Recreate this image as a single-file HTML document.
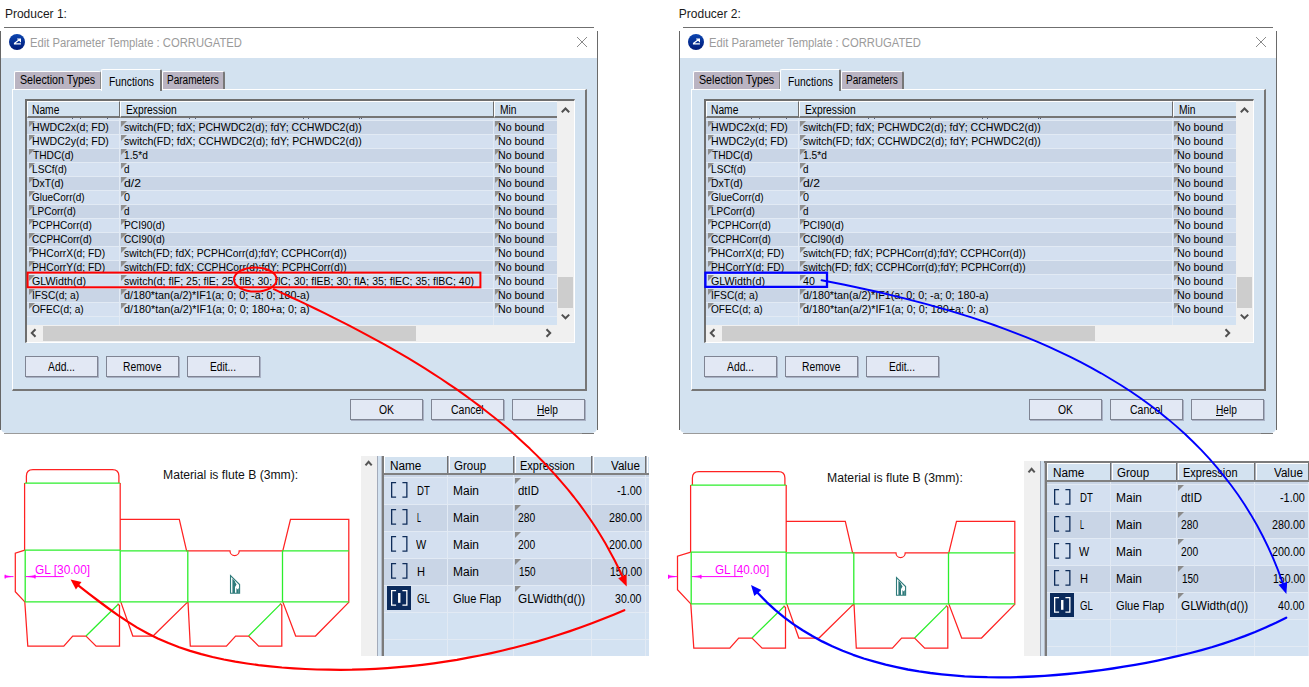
<!DOCTYPE html><html><head><meta charset="utf-8"><title>Producers</title><style>
html,body{margin:0;padding:0;background:#fff;}body{width:1309px;height:687px;position:relative;overflow:hidden;font-family:'Liberation Sans',sans-serif;}
.a{position:absolute}.t{position:absolute;white-space:pre}
.tri{width:0;height:0;border-top:6px solid #8e8e8e;border-right:6px solid transparent}
.tri2{width:0;height:0;border-top:6px solid #8a8a8a;border-right:6px solid transparent}
</style></head><body>
<span class="t" style="top:7.74px;font-size:12px;line-height:12px;color:#1a1a1a;left:4.90px;transform-origin:0 0;">Producer 1:</span>
<div class="a" style="left:4px;top:27px;width:590px;height:1px;background:#6f6f6f;"></div>
<div class="a" style="left:1px;top:58px;width:596px;height:375px;background:#d3e2f0;border-radius:0 0 5px 5px;"></div>
<div class="a" style="left:0px;top:31px;width:1px;height:399px;background:#666;"></div>
<div class="a" style="left:597px;top:31px;width:1px;height:399px;background:#6a6a6a;"></div>
<div class="a" style="left:4px;top:433px;width:590px;height:1px;background:#9a9a9a;"></div>
<div class="a" style="left:582px;top:433px;width:12px;height:1px;background:#777;"></div>
<svg class="a" style="left:8px;top:33px" width="18" height="18" viewBox="0 0 18 18"><defs><linearGradient id="ig1" x1="0" y1="0" x2="0" y2="1"><stop offset="0" stop-color="#0c45b0"/><stop offset="1" stop-color="#001a78"/></linearGradient></defs><circle cx="9" cy="9" r="8" fill="url(#ig1)"/><path d="M5.9 10.9 H12.9 M6.3 10.6 L12.2 6.1 M9.1 6 H12.4 V9.2" stroke="#fff" stroke-width="1.2" fill="none"/></svg>
<span class="t" style="top:36.64px;font-size:12px;line-height:12px;color:#9b9b9b;left:30.00px;transform-origin:0 0;transform:scaleX(0.9367);">Edit Parameter Template : CORRUGATED</span>
<svg class="a" style="left:576px;top:36px" width="12" height="12" viewBox="0 0 12 12"><path d="M1 1 L11 11 M11 1 L1 11" stroke="#8a8a8a" stroke-width="1" fill="none"/></svg>
<div class="a" style="left:12px;top:89px;width:575px;height:302px;background:#d3e2f0;box-sizing:border-box;border-left:1px solid #fff;border-top:1px solid #fff;border-right:2px solid #767676;border-bottom:2px solid #767676;"></div>
<div class="a" style="left:14px;top:71px;width:87px;height:18px;background:#bab4c2;box-sizing:border-box;border-left:1px solid #fff;border-top:1px solid #fff;border-right:1px solid #8a8a8a;border-radius:2px 2px 0 0;"></div>
<div class="a" style="left:162px;top:71px;width:63px;height:18px;background:#bab4c2;box-sizing:border-box;border-left:1px solid #fff;border-top:1px solid #fff;border-right:2px solid #777;border-radius:2px 2px 0 0;"></div>
<div class="a" style="left:101px;top:69px;width:61px;height:22px;background:#d3e2f0;box-sizing:border-box;border-left:1px solid #fff;border-top:1px solid #fff;border-right:2px solid #777;border-radius:2px 2px 0 0;"></div>
<span class="t" style="top:74.42px;font-size:12.5px;line-height:12.5px;color:#000;left:20.40px;transform-origin:0 0;transform:scaleX(0.8545);">Selection Types</span>
<span class="t" style="top:75.92px;font-size:12.5px;line-height:12.5px;color:#000;left:108.60px;transform-origin:0 0;transform:scaleX(0.8268);">Functions</span>
<span class="t" style="top:74.42px;font-size:12.5px;line-height:12.5px;color:#000;left:166.60px;transform-origin:0 0;transform:scaleX(0.8015);">Parameters</span>
<div class="a" style="left:25px;top:99px;width:550px;height:244px;background:#f0f0f0;box-sizing:border-box;border-left:2px solid #6e6e6e;border-top:2px solid #6e6e6e;border-right:1px solid #fff;border-bottom:1px solid #fff;"></div>
<div class="a" style="left:27px;top:101px;width:93px;height:17px;background:#d3e2f0;box-sizing:border-box;border-left:1px solid #fff;border-top:1px solid #fff;border-bottom:2px solid #757575;border-right:1px solid #6e6e6e;"></div>
<span class="t" style="top:104.02px;font-size:12.5px;line-height:12.5px;color:#000;left:31.50px;transform-origin:0 0;transform:scaleX(0.8200);">Name</span>
<div class="a" style="left:120px;top:101px;width:374px;height:17px;background:#d3e2f0;box-sizing:border-box;border-left:1px solid #fff;border-top:1px solid #fff;border-bottom:2px solid #757575;border-right:1px solid #6e6e6e;"></div>
<span class="t" style="top:104.02px;font-size:12.5px;line-height:12.5px;color:#000;left:126.20px;transform-origin:0 0;transform:scaleX(0.8200);">Expression</span>
<div class="a" style="left:494px;top:101px;width:63px;height:17px;background:#d3e2f0;box-sizing:border-box;border-left:1px solid #fff;border-top:1px solid #fff;border-bottom:2px solid #757575;"></div>
<span class="t" style="top:104.02px;font-size:12.5px;line-height:12.5px;color:#000;left:499.80px;transform-origin:0 0;transform:scaleX(0.8200);">Min</span>
<div class="a" style="left:27px;top:118px;width:530px;height:207px;background:#d4e0f0;"></div>
<div class="a" style="left:27px;top:120px;width:530px;height:1px;background:#e2eaf4;"></div>
<div class="a" style="left:27px;top:121px;width:530px;height:13px;background:#c9d5e6;"></div>
<div class="a tri" style="left:29px;top:121px;"></div>
<div class="a tri" style="left:121px;top:121px;"></div>
<div class="a tri" style="left:495px;top:121px;"></div>
<span class="t" style="top:121.77px;font-size:11.5px;line-height:11.5px;color:#000;left:31.90px;transform-origin:0 0;transform:scaleX(0.9185);">HWDC2x(d; FD)</span>
<span class="t" style="top:121.77px;font-size:11.5px;line-height:11.5px;color:#000;left:124.00px;transform-origin:0 0;transform:scaleX(0.9174);">switch(FD; fdX; PCHWDC2(d); fdY; CCHWDC2(d))</span>
<span class="t" style="top:121.77px;font-size:11.5px;line-height:11.5px;color:#000;left:497.80px;transform-origin:0 0;transform:scaleX(0.9267);">No bound</span>
<div class="a" style="left:27px;top:134px;width:530px;height:1px;background:#e2eaf4;"></div>
<div class="a" style="left:27px;top:135px;width:530px;height:13px;background:#d4e0f0;"></div>
<div class="a tri" style="left:29px;top:135px;"></div>
<div class="a tri" style="left:121px;top:135px;"></div>
<div class="a tri" style="left:495px;top:135px;"></div>
<span class="t" style="top:135.77px;font-size:11.5px;line-height:11.5px;color:#000;left:31.90px;transform-origin:0 0;transform:scaleX(0.9185);">HWDC2y(d; FD)</span>
<span class="t" style="top:135.77px;font-size:11.5px;line-height:11.5px;color:#000;left:124.00px;transform-origin:0 0;transform:scaleX(0.9174);">switch(FD; fdX; CCHWDC2(d); fdY; PCHWDC2(d))</span>
<span class="t" style="top:135.77px;font-size:11.5px;line-height:11.5px;color:#000;left:497.80px;transform-origin:0 0;transform:scaleX(0.9267);">No bound</span>
<div class="a" style="left:27px;top:148px;width:530px;height:1px;background:#e2eaf4;"></div>
<div class="a" style="left:27px;top:149px;width:530px;height:13px;background:#c9d5e6;"></div>
<div class="a tri" style="left:29px;top:149px;"></div>
<div class="a tri" style="left:121px;top:149px;"></div>
<div class="a tri" style="left:495px;top:149px;"></div>
<span class="t" style="top:149.77px;font-size:11.5px;line-height:11.5px;color:#000;left:33.20px;transform-origin:0 0;transform:scaleX(0.8848);">THDC(d)</span>
<span class="t" style="top:149.77px;font-size:11.5px;line-height:11.5px;color:#000;left:124.00px;transform-origin:0 0;transform:scaleX(0.8863);">1.5*d</span>
<span class="t" style="top:149.77px;font-size:11.5px;line-height:11.5px;color:#000;left:497.80px;transform-origin:0 0;transform:scaleX(0.9267);">No bound</span>
<div class="a" style="left:27px;top:162px;width:530px;height:1px;background:#e2eaf4;"></div>
<div class="a" style="left:27px;top:163px;width:530px;height:13px;background:#d4e0f0;"></div>
<div class="a tri" style="left:29px;top:163px;"></div>
<div class="a tri" style="left:121px;top:163px;"></div>
<div class="a tri" style="left:495px;top:163px;"></div>
<span class="t" style="top:163.77px;font-size:11.5px;line-height:11.5px;color:#000;left:31.90px;transform-origin:0 0;transform:scaleX(0.8809);">LSCf(d)</span>
<span class="t" style="top:163.77px;font-size:11.5px;line-height:11.5px;color:#000;left:124.00px;transform-origin:0 0;transform:scaleX(0.8617);">d</span>
<span class="t" style="top:163.77px;font-size:11.5px;line-height:11.5px;color:#000;left:497.80px;transform-origin:0 0;transform:scaleX(0.9267);">No bound</span>
<div class="a" style="left:27px;top:176px;width:530px;height:1px;background:#e2eaf4;"></div>
<div class="a" style="left:27px;top:177px;width:530px;height:13px;background:#c9d5e6;"></div>
<div class="a tri" style="left:29px;top:177px;"></div>
<div class="a tri" style="left:121px;top:177px;"></div>
<div class="a tri" style="left:495px;top:177px;"></div>
<span class="t" style="top:177.77px;font-size:11.5px;line-height:11.5px;color:#000;left:31.90px;transform-origin:0 0;transform:scaleX(0.9051);">DxT(d)</span>
<span class="t" style="top:177.77px;font-size:11.5px;line-height:11.5px;color:#000;left:124.00px;transform-origin:0 0;transform:scaleX(1.0572);">d/2</span>
<span class="t" style="top:177.77px;font-size:11.5px;line-height:11.5px;color:#000;left:497.80px;transform-origin:0 0;transform:scaleX(0.9267);">No bound</span>
<div class="a" style="left:27px;top:190px;width:530px;height:1px;background:#e2eaf4;"></div>
<div class="a" style="left:27px;top:191px;width:530px;height:13px;background:#d4e0f0;"></div>
<div class="a tri" style="left:29px;top:191px;"></div>
<div class="a tri" style="left:121px;top:191px;"></div>
<div class="a tri" style="left:495px;top:191px;"></div>
<span class="t" style="top:191.77px;font-size:11.5px;line-height:11.5px;color:#000;left:31.90px;transform-origin:0 0;transform:scaleX(0.8679);">GlueCorr(d)</span>
<span class="t" style="top:191.77px;font-size:11.5px;line-height:11.5px;color:#000;left:124.00px;transform-origin:0 0;transform:scaleX(0.9401);">0</span>
<span class="t" style="top:191.77px;font-size:11.5px;line-height:11.5px;color:#000;left:497.80px;transform-origin:0 0;transform:scaleX(0.9267);">No bound</span>
<div class="a" style="left:27px;top:204px;width:530px;height:1px;background:#e2eaf4;"></div>
<div class="a" style="left:27px;top:205px;width:530px;height:13px;background:#c9d5e6;"></div>
<div class="a tri" style="left:29px;top:205px;"></div>
<div class="a tri" style="left:121px;top:205px;"></div>
<div class="a tri" style="left:495px;top:205px;"></div>
<span class="t" style="top:205.77px;font-size:11.5px;line-height:11.5px;color:#000;left:31.90px;transform-origin:0 0;transform:scaleX(0.8676);">LPCorr(d)</span>
<span class="t" style="top:205.77px;font-size:11.5px;line-height:11.5px;color:#000;left:124.00px;transform-origin:0 0;transform:scaleX(0.8617);">d</span>
<span class="t" style="top:205.77px;font-size:11.5px;line-height:11.5px;color:#000;left:497.80px;transform-origin:0 0;transform:scaleX(0.9267);">No bound</span>
<div class="a" style="left:27px;top:218px;width:530px;height:1px;background:#e2eaf4;"></div>
<div class="a" style="left:27px;top:219px;width:530px;height:13px;background:#d4e0f0;"></div>
<div class="a tri" style="left:29px;top:219px;"></div>
<div class="a tri" style="left:121px;top:219px;"></div>
<div class="a tri" style="left:495px;top:219px;"></div>
<span class="t" style="top:219.77px;font-size:11.5px;line-height:11.5px;color:#000;left:31.90px;transform-origin:0 0;transform:scaleX(0.8747);">PCPHCorr(d)</span>
<span class="t" style="top:219.77px;font-size:11.5px;line-height:11.5px;color:#000;left:124.00px;transform-origin:0 0;transform:scaleX(0.8891);">PCI90(d)</span>
<span class="t" style="top:219.77px;font-size:11.5px;line-height:11.5px;color:#000;left:497.80px;transform-origin:0 0;transform:scaleX(0.9267);">No bound</span>
<div class="a" style="left:27px;top:232px;width:530px;height:1px;background:#e2eaf4;"></div>
<div class="a" style="left:27px;top:233px;width:530px;height:13px;background:#c9d5e6;"></div>
<div class="a tri" style="left:29px;top:233px;"></div>
<div class="a tri" style="left:121px;top:233px;"></div>
<div class="a tri" style="left:495px;top:233px;"></div>
<span class="t" style="top:233.77px;font-size:11.5px;line-height:11.5px;color:#000;left:31.90px;transform-origin:0 0;transform:scaleX(0.8667);">CCPHCorr(d)</span>
<span class="t" style="top:233.77px;font-size:11.5px;line-height:11.5px;color:#000;left:124.00px;transform-origin:0 0;transform:scaleX(0.8771);">CCI90(d)</span>
<span class="t" style="top:233.77px;font-size:11.5px;line-height:11.5px;color:#000;left:497.80px;transform-origin:0 0;transform:scaleX(0.9267);">No bound</span>
<div class="a" style="left:27px;top:246px;width:530px;height:1px;background:#e2eaf4;"></div>
<div class="a" style="left:27px;top:247px;width:530px;height:13px;background:#d4e0f0;"></div>
<div class="a tri" style="left:29px;top:247px;"></div>
<div class="a tri" style="left:121px;top:247px;"></div>
<div class="a tri" style="left:495px;top:247px;"></div>
<span class="t" style="top:247.77px;font-size:11.5px;line-height:11.5px;color:#000;left:31.90px;transform-origin:0 0;transform:scaleX(0.8940);">PHCorrX(d; FD)</span>
<span class="t" style="top:247.77px;font-size:11.5px;line-height:11.5px;color:#000;left:124.00px;transform-origin:0 0;transform:scaleX(0.8959);">switch(FD; fdX; PCPHCorr(d);fdY; CCPHCorr(d))</span>
<span class="t" style="top:247.77px;font-size:11.5px;line-height:11.5px;color:#000;left:497.80px;transform-origin:0 0;transform:scaleX(0.9267);">No bound</span>
<div class="a" style="left:27px;top:260px;width:530px;height:1px;background:#e2eaf4;"></div>
<div class="a" style="left:27px;top:261px;width:530px;height:13px;background:#c9d5e6;"></div>
<div class="a tri" style="left:29px;top:261px;"></div>
<div class="a tri" style="left:121px;top:261px;"></div>
<div class="a tri" style="left:495px;top:261px;"></div>
<span class="t" style="top:261.77px;font-size:11.5px;line-height:11.5px;color:#000;left:31.90px;transform-origin:0 0;transform:scaleX(0.8940);">PHCorrY(d; FD)</span>
<span class="t" style="top:261.77px;font-size:11.5px;line-height:11.5px;color:#000;left:124.00px;transform-origin:0 0;transform:scaleX(0.8959);">switch(FD; fdX; CCPHCorr(d);fdY; PCPHCorr(d))</span>
<span class="t" style="top:261.77px;font-size:11.5px;line-height:11.5px;color:#000;left:497.80px;transform-origin:0 0;transform:scaleX(0.9267);">No bound</span>
<div class="a" style="left:27px;top:274px;width:530px;height:1px;background:#e2eaf4;"></div>
<div class="a" style="left:27px;top:275px;width:530px;height:13px;background:#d4e0f0;"></div>
<div class="a tri" style="left:29px;top:275px;"></div>
<div class="a tri" style="left:121px;top:275px;"></div>
<div class="a tri" style="left:495px;top:275px;"></div>
<span class="t" style="top:275.77px;font-size:11.5px;line-height:11.5px;color:#000;left:31.90px;transform-origin:0 0;transform:scaleX(0.9317);">GLWidth(d)</span>
<span class="t" style="top:275.77px;font-size:11.5px;line-height:11.5px;color:#000;left:124.00px;transform-origin:0 0;transform:scaleX(0.9157);">switch(d; flF; 25; flE; 25; flB; 30; flC; 30; flEB; 30; flA; 35; flEC; 35; flBC; 40)</span>
<span class="t" style="top:275.77px;font-size:11.5px;line-height:11.5px;color:#000;left:497.80px;transform-origin:0 0;transform:scaleX(0.9267);">No bound</span>
<div class="a" style="left:27px;top:288px;width:530px;height:1px;background:#e2eaf4;"></div>
<div class="a" style="left:27px;top:289px;width:530px;height:13px;background:#c9d5e6;"></div>
<div class="a tri" style="left:29px;top:289px;"></div>
<div class="a tri" style="left:121px;top:289px;"></div>
<div class="a tri" style="left:495px;top:289px;"></div>
<span class="t" style="top:289.77px;font-size:11.5px;line-height:11.5px;color:#000;left:31.90px;transform-origin:0 0;transform:scaleX(0.8884);">IFSC(d; a)</span>
<span class="t" style="top:289.77px;font-size:11.5px;line-height:11.5px;color:#000;left:124.00px;transform-origin:0 0;transform:scaleX(0.9334);">d/180*tan(a/2)*IF1(a; 0; 0; -a; 0; 180-a)</span>
<span class="t" style="top:289.77px;font-size:11.5px;line-height:11.5px;color:#000;left:497.80px;transform-origin:0 0;transform:scaleX(0.9267);">No bound</span>
<div class="a" style="left:27px;top:302px;width:530px;height:1px;background:#e2eaf4;"></div>
<div class="a" style="left:27px;top:303px;width:530px;height:13px;background:#d4e0f0;"></div>
<div class="a tri" style="left:29px;top:303px;"></div>
<div class="a tri" style="left:121px;top:303px;"></div>
<div class="a tri" style="left:495px;top:303px;"></div>
<span class="t" style="top:303.77px;font-size:11.5px;line-height:11.5px;color:#000;left:31.90px;transform-origin:0 0;transform:scaleX(0.8798);">OFEC(d; a)</span>
<span class="t" style="top:303.77px;font-size:11.5px;line-height:11.5px;color:#000;left:124.00px;transform-origin:0 0;transform:scaleX(0.9380);">d/180*tan(a/2)*IF1(a; 0; 0; 180+a; 0; a)</span>
<span class="t" style="top:303.77px;font-size:11.5px;line-height:11.5px;color:#000;left:497.80px;transform-origin:0 0;transform:scaleX(0.9267);">No bound</span>
<div class="a" style="left:27px;top:316px;width:530px;height:1px;background:#e2eaf4;"></div>
<div class="a" style="left:27px;top:317px;width:530px;height:8px;background:#d3e2f2;"></div>
<div class="a" style="left:72px;top:118px;width:1px;height:1px;background:#56607a;"></div>
<div class="a" style="left:80px;top:118px;width:1px;height:1px;background:#56607a;"></div>
<div class="a" style="left:107px;top:118px;width:1px;height:1px;background:#56607a;"></div>
<div class="a" style="left:189px;top:118px;width:1px;height:1px;background:#56607a;"></div>
<div class="a" style="left:195px;top:118px;width:1px;height:1px;background:#56607a;"></div>
<div class="a" style="left:251px;top:118px;width:1px;height:1px;background:#56607a;"></div>
<div class="a" style="left:303px;top:118px;width:1px;height:1px;background:#56607a;"></div>
<div class="a" style="left:308px;top:118px;width:1px;height:1px;background:#56607a;"></div>
<div class="a" style="left:359px;top:118px;width:1px;height:1px;background:#56607a;"></div>
<div class="a" style="left:361px;top:118px;width:1px;height:1px;background:#56607a;"></div>
<div class="a" style="left:119px;top:118px;width:1px;height:207px;background:#e2eaf4;"></div>
<div class="a" style="left:493px;top:118px;width:1px;height:207px;background:#e2eaf4;"></div>
<div class="a" style="left:557px;top:101px;width:17px;height:224px;background:#f0f0f0;"></div>
<div class="a" style="left:558px;top:277px;width:15px;height:31px;background:#cdcdcd;"></div>
<svg class="a" style="left:557px;top:101px" width="17" height="224" viewBox="0 0 17 224"><path d="M4.8 11.2 L8.5 7.5 L12.2 11.2 M4.8 213.6 L8.5 217.3 L12.2 213.6" stroke="#505050" stroke-width="2" fill="none"/></svg>
<div class="a" style="left:27px;top:325px;width:547px;height:17px;background:#f0f0f0;"></div>
<div class="a" style="left:43px;top:326px;width:373px;height:15px;background:#cdcdcd;"></div>
<svg class="a" style="left:27px;top:325px" width="530" height="16" viewBox="0 0 530 16"><path d="M8.5 4.3 L4.8 8 L8.5 11.7 M519.5 4.3 L523.2 8 L519.5 11.7" stroke="#505050" stroke-width="2" fill="none"/></svg>
<div class="a" style="left:25px;top:356px;width:73px;height:21px;background:#e2e8f4;box-sizing:border-box;border:1px solid #7f8493;box-shadow:1px 1px 0 #a9b1c4;"></div>
<span class="t" style="top:361.44px;font-size:12px;line-height:12px;color:#000;left:47.50px;transform-origin:0 0;transform:scaleX(0.8604);">Add...</span>
<div class="a" style="left:106px;top:356px;width:73px;height:21px;background:#e2e8f4;box-sizing:border-box;border:1px solid #7f8493;box-shadow:1px 1px 0 #a9b1c4;"></div>
<span class="t" style="top:361.44px;font-size:12px;line-height:12px;color:#000;left:122.80px;transform-origin:0 0;transform:scaleX(0.8591);">Remove</span>
<div class="a" style="left:187px;top:356px;width:73px;height:21px;background:#e2e8f4;box-sizing:border-box;border:1px solid #7f8493;box-shadow:1px 1px 0 #a9b1c4;"></div>
<span class="t" style="top:361.44px;font-size:12px;line-height:12px;color:#000;left:210.40px;transform-origin:0 0;transform:scaleX(0.8480);">Edit...</span>
<div class="a" style="left:350px;top:399px;width:73px;height:21px;background:#e2e8f4;box-sizing:border-box;border:1px solid #7f8493;box-shadow:1px 1px 0 #a9b1c4;"></div>
<span class="t" style="top:404.44px;font-size:12px;line-height:12px;color:#000;left:378.50px;transform-origin:0 0;transform:scaleX(0.8651);">OK</span>
<div class="a" style="left:431px;top:399px;width:73px;height:21px;background:#e2e8f4;box-sizing:border-box;border:1px solid #7f8493;box-shadow:1px 1px 0 #a9b1c4;"></div>
<span class="t" style="top:404.44px;font-size:12px;line-height:12px;color:#000;left:450.50px;transform-origin:0 0;transform:scaleX(0.8748);">Cancel</span>
<div class="a" style="left:512px;top:399px;width:73px;height:21px;background:#e2e8f4;box-sizing:border-box;border:1px solid #7f8493;box-shadow:1px 1px 0 #a9b1c4;"></div>
<span class="t" style="top:404.44px;font-size:12px;line-height:12px;color:#000;left:537.30px;transform-origin:0 0;transform:scaleX(0.8475);"><u>H</u>elp</span>
<span class="t" style="top:7.74px;font-size:12px;line-height:12px;color:#1a1a1a;left:678.80px;transform-origin:0 0;">Producer 2:</span>
<div class="a" style="left:683px;top:27px;width:590px;height:1px;background:#6f6f6f;"></div>
<div class="a" style="left:680px;top:58px;width:596px;height:375px;background:#d3e2f0;border-radius:0 0 5px 5px;"></div>
<div class="a" style="left:679px;top:31px;width:1px;height:399px;background:#666;"></div>
<div class="a" style="left:1276px;top:31px;width:1px;height:399px;background:#6a6a6a;"></div>
<div class="a" style="left:683px;top:433px;width:590px;height:1px;background:#9a9a9a;"></div>
<div class="a" style="left:1261px;top:433px;width:12px;height:1px;background:#777;"></div>
<svg class="a" style="left:687px;top:33px" width="18" height="18" viewBox="0 0 18 18"><defs><linearGradient id="ig2" x1="0" y1="0" x2="0" y2="1"><stop offset="0" stop-color="#0c45b0"/><stop offset="1" stop-color="#001a78"/></linearGradient></defs><circle cx="9" cy="9" r="8" fill="url(#ig2)"/><path d="M5.9 10.9 H12.9 M6.3 10.6 L12.2 6.1 M9.1 6 H12.4 V9.2" stroke="#fff" stroke-width="1.2" fill="none"/></svg>
<span class="t" style="top:36.64px;font-size:12px;line-height:12px;color:#9b9b9b;left:709.00px;transform-origin:0 0;transform:scaleX(0.9367);">Edit Parameter Template : CORRUGATED</span>
<svg class="a" style="left:1255px;top:36px" width="12" height="12" viewBox="0 0 12 12"><path d="M1 1 L11 11 M11 1 L1 11" stroke="#8a8a8a" stroke-width="1" fill="none"/></svg>
<div class="a" style="left:691px;top:89px;width:575px;height:302px;background:#d3e2f0;box-sizing:border-box;border-left:1px solid #fff;border-top:1px solid #fff;border-right:2px solid #767676;border-bottom:2px solid #767676;"></div>
<div class="a" style="left:693px;top:71px;width:87px;height:18px;background:#bab4c2;box-sizing:border-box;border-left:1px solid #fff;border-top:1px solid #fff;border-right:1px solid #8a8a8a;border-radius:2px 2px 0 0;"></div>
<div class="a" style="left:841px;top:71px;width:63px;height:18px;background:#bab4c2;box-sizing:border-box;border-left:1px solid #fff;border-top:1px solid #fff;border-right:2px solid #777;border-radius:2px 2px 0 0;"></div>
<div class="a" style="left:780px;top:69px;width:61px;height:22px;background:#d3e2f0;box-sizing:border-box;border-left:1px solid #fff;border-top:1px solid #fff;border-right:2px solid #777;border-radius:2px 2px 0 0;"></div>
<span class="t" style="top:74.42px;font-size:12.5px;line-height:12.5px;color:#000;left:699.40px;transform-origin:0 0;transform:scaleX(0.8545);">Selection Types</span>
<span class="t" style="top:75.92px;font-size:12.5px;line-height:12.5px;color:#000;left:787.60px;transform-origin:0 0;transform:scaleX(0.8268);">Functions</span>
<span class="t" style="top:74.42px;font-size:12.5px;line-height:12.5px;color:#000;left:845.60px;transform-origin:0 0;transform:scaleX(0.8015);">Parameters</span>
<div class="a" style="left:704px;top:99px;width:550px;height:244px;background:#f0f0f0;box-sizing:border-box;border-left:2px solid #6e6e6e;border-top:2px solid #6e6e6e;border-right:1px solid #fff;border-bottom:1px solid #fff;"></div>
<div class="a" style="left:706px;top:101px;width:93px;height:17px;background:#d3e2f0;box-sizing:border-box;border-left:1px solid #fff;border-top:1px solid #fff;border-bottom:2px solid #757575;border-right:1px solid #6e6e6e;"></div>
<span class="t" style="top:104.02px;font-size:12.5px;line-height:12.5px;color:#000;left:710.50px;transform-origin:0 0;transform:scaleX(0.8200);">Name</span>
<div class="a" style="left:799px;top:101px;width:374px;height:17px;background:#d3e2f0;box-sizing:border-box;border-left:1px solid #fff;border-top:1px solid #fff;border-bottom:2px solid #757575;border-right:1px solid #6e6e6e;"></div>
<span class="t" style="top:104.02px;font-size:12.5px;line-height:12.5px;color:#000;left:805.20px;transform-origin:0 0;transform:scaleX(0.8200);">Expression</span>
<div class="a" style="left:1173px;top:101px;width:63px;height:17px;background:#d3e2f0;box-sizing:border-box;border-left:1px solid #fff;border-top:1px solid #fff;border-bottom:2px solid #757575;"></div>
<span class="t" style="top:104.02px;font-size:12.5px;line-height:12.5px;color:#000;left:1178.80px;transform-origin:0 0;transform:scaleX(0.8200);">Min</span>
<div class="a" style="left:706px;top:118px;width:530px;height:207px;background:#d4e0f0;"></div>
<div class="a" style="left:706px;top:120px;width:530px;height:1px;background:#e2eaf4;"></div>
<div class="a" style="left:706px;top:121px;width:530px;height:13px;background:#c9d5e6;"></div>
<div class="a tri" style="left:708px;top:121px;"></div>
<div class="a tri" style="left:800px;top:121px;"></div>
<div class="a tri" style="left:1174px;top:121px;"></div>
<span class="t" style="top:121.77px;font-size:11.5px;line-height:11.5px;color:#000;left:710.90px;transform-origin:0 0;transform:scaleX(0.9185);">HWDC2x(d; FD)</span>
<span class="t" style="top:121.77px;font-size:11.5px;line-height:11.5px;color:#000;left:803.00px;transform-origin:0 0;transform:scaleX(0.9174);">switch(FD; fdX; PCHWDC2(d); fdY; CCHWDC2(d))</span>
<span class="t" style="top:121.77px;font-size:11.5px;line-height:11.5px;color:#000;left:1176.80px;transform-origin:0 0;transform:scaleX(0.9267);">No bound</span>
<div class="a" style="left:706px;top:134px;width:530px;height:1px;background:#e2eaf4;"></div>
<div class="a" style="left:706px;top:135px;width:530px;height:13px;background:#d4e0f0;"></div>
<div class="a tri" style="left:708px;top:135px;"></div>
<div class="a tri" style="left:800px;top:135px;"></div>
<div class="a tri" style="left:1174px;top:135px;"></div>
<span class="t" style="top:135.77px;font-size:11.5px;line-height:11.5px;color:#000;left:710.90px;transform-origin:0 0;transform:scaleX(0.9185);">HWDC2y(d; FD)</span>
<span class="t" style="top:135.77px;font-size:11.5px;line-height:11.5px;color:#000;left:803.00px;transform-origin:0 0;transform:scaleX(0.9174);">switch(FD; fdX; CCHWDC2(d); fdY; PCHWDC2(d))</span>
<span class="t" style="top:135.77px;font-size:11.5px;line-height:11.5px;color:#000;left:1176.80px;transform-origin:0 0;transform:scaleX(0.9267);">No bound</span>
<div class="a" style="left:706px;top:148px;width:530px;height:1px;background:#e2eaf4;"></div>
<div class="a" style="left:706px;top:149px;width:530px;height:13px;background:#c9d5e6;"></div>
<div class="a tri" style="left:708px;top:149px;"></div>
<div class="a tri" style="left:800px;top:149px;"></div>
<div class="a tri" style="left:1174px;top:149px;"></div>
<span class="t" style="top:149.77px;font-size:11.5px;line-height:11.5px;color:#000;left:712.20px;transform-origin:0 0;transform:scaleX(0.8848);">THDC(d)</span>
<span class="t" style="top:149.77px;font-size:11.5px;line-height:11.5px;color:#000;left:803.00px;transform-origin:0 0;transform:scaleX(0.8863);">1.5*d</span>
<span class="t" style="top:149.77px;font-size:11.5px;line-height:11.5px;color:#000;left:1176.80px;transform-origin:0 0;transform:scaleX(0.9267);">No bound</span>
<div class="a" style="left:706px;top:162px;width:530px;height:1px;background:#e2eaf4;"></div>
<div class="a" style="left:706px;top:163px;width:530px;height:13px;background:#d4e0f0;"></div>
<div class="a tri" style="left:708px;top:163px;"></div>
<div class="a tri" style="left:800px;top:163px;"></div>
<div class="a tri" style="left:1174px;top:163px;"></div>
<span class="t" style="top:163.77px;font-size:11.5px;line-height:11.5px;color:#000;left:710.90px;transform-origin:0 0;transform:scaleX(0.8809);">LSCf(d)</span>
<span class="t" style="top:163.77px;font-size:11.5px;line-height:11.5px;color:#000;left:803.00px;transform-origin:0 0;transform:scaleX(0.8617);">d</span>
<span class="t" style="top:163.77px;font-size:11.5px;line-height:11.5px;color:#000;left:1176.80px;transform-origin:0 0;transform:scaleX(0.9267);">No bound</span>
<div class="a" style="left:706px;top:176px;width:530px;height:1px;background:#e2eaf4;"></div>
<div class="a" style="left:706px;top:177px;width:530px;height:13px;background:#c9d5e6;"></div>
<div class="a tri" style="left:708px;top:177px;"></div>
<div class="a tri" style="left:800px;top:177px;"></div>
<div class="a tri" style="left:1174px;top:177px;"></div>
<span class="t" style="top:177.77px;font-size:11.5px;line-height:11.5px;color:#000;left:710.90px;transform-origin:0 0;transform:scaleX(0.9051);">DxT(d)</span>
<span class="t" style="top:177.77px;font-size:11.5px;line-height:11.5px;color:#000;left:803.00px;transform-origin:0 0;transform:scaleX(1.0572);">d/2</span>
<span class="t" style="top:177.77px;font-size:11.5px;line-height:11.5px;color:#000;left:1176.80px;transform-origin:0 0;transform:scaleX(0.9267);">No bound</span>
<div class="a" style="left:706px;top:190px;width:530px;height:1px;background:#e2eaf4;"></div>
<div class="a" style="left:706px;top:191px;width:530px;height:13px;background:#d4e0f0;"></div>
<div class="a tri" style="left:708px;top:191px;"></div>
<div class="a tri" style="left:800px;top:191px;"></div>
<div class="a tri" style="left:1174px;top:191px;"></div>
<span class="t" style="top:191.77px;font-size:11.5px;line-height:11.5px;color:#000;left:710.90px;transform-origin:0 0;transform:scaleX(0.8679);">GlueCorr(d)</span>
<span class="t" style="top:191.77px;font-size:11.5px;line-height:11.5px;color:#000;left:803.00px;transform-origin:0 0;transform:scaleX(0.9401);">0</span>
<span class="t" style="top:191.77px;font-size:11.5px;line-height:11.5px;color:#000;left:1176.80px;transform-origin:0 0;transform:scaleX(0.9267);">No bound</span>
<div class="a" style="left:706px;top:204px;width:530px;height:1px;background:#e2eaf4;"></div>
<div class="a" style="left:706px;top:205px;width:530px;height:13px;background:#c9d5e6;"></div>
<div class="a tri" style="left:708px;top:205px;"></div>
<div class="a tri" style="left:800px;top:205px;"></div>
<div class="a tri" style="left:1174px;top:205px;"></div>
<span class="t" style="top:205.77px;font-size:11.5px;line-height:11.5px;color:#000;left:710.90px;transform-origin:0 0;transform:scaleX(0.8676);">LPCorr(d)</span>
<span class="t" style="top:205.77px;font-size:11.5px;line-height:11.5px;color:#000;left:803.00px;transform-origin:0 0;transform:scaleX(0.8617);">d</span>
<span class="t" style="top:205.77px;font-size:11.5px;line-height:11.5px;color:#000;left:1176.80px;transform-origin:0 0;transform:scaleX(0.9267);">No bound</span>
<div class="a" style="left:706px;top:218px;width:530px;height:1px;background:#e2eaf4;"></div>
<div class="a" style="left:706px;top:219px;width:530px;height:13px;background:#d4e0f0;"></div>
<div class="a tri" style="left:708px;top:219px;"></div>
<div class="a tri" style="left:800px;top:219px;"></div>
<div class="a tri" style="left:1174px;top:219px;"></div>
<span class="t" style="top:219.77px;font-size:11.5px;line-height:11.5px;color:#000;left:710.90px;transform-origin:0 0;transform:scaleX(0.8747);">PCPHCorr(d)</span>
<span class="t" style="top:219.77px;font-size:11.5px;line-height:11.5px;color:#000;left:803.00px;transform-origin:0 0;transform:scaleX(0.8891);">PCI90(d)</span>
<span class="t" style="top:219.77px;font-size:11.5px;line-height:11.5px;color:#000;left:1176.80px;transform-origin:0 0;transform:scaleX(0.9267);">No bound</span>
<div class="a" style="left:706px;top:232px;width:530px;height:1px;background:#e2eaf4;"></div>
<div class="a" style="left:706px;top:233px;width:530px;height:13px;background:#c9d5e6;"></div>
<div class="a tri" style="left:708px;top:233px;"></div>
<div class="a tri" style="left:800px;top:233px;"></div>
<div class="a tri" style="left:1174px;top:233px;"></div>
<span class="t" style="top:233.77px;font-size:11.5px;line-height:11.5px;color:#000;left:710.90px;transform-origin:0 0;transform:scaleX(0.8667);">CCPHCorr(d)</span>
<span class="t" style="top:233.77px;font-size:11.5px;line-height:11.5px;color:#000;left:803.00px;transform-origin:0 0;transform:scaleX(0.8771);">CCI90(d)</span>
<span class="t" style="top:233.77px;font-size:11.5px;line-height:11.5px;color:#000;left:1176.80px;transform-origin:0 0;transform:scaleX(0.9267);">No bound</span>
<div class="a" style="left:706px;top:246px;width:530px;height:1px;background:#e2eaf4;"></div>
<div class="a" style="left:706px;top:247px;width:530px;height:13px;background:#d4e0f0;"></div>
<div class="a tri" style="left:708px;top:247px;"></div>
<div class="a tri" style="left:800px;top:247px;"></div>
<div class="a tri" style="left:1174px;top:247px;"></div>
<span class="t" style="top:247.77px;font-size:11.5px;line-height:11.5px;color:#000;left:710.90px;transform-origin:0 0;transform:scaleX(0.8940);">PHCorrX(d; FD)</span>
<span class="t" style="top:247.77px;font-size:11.5px;line-height:11.5px;color:#000;left:803.00px;transform-origin:0 0;transform:scaleX(0.8959);">switch(FD; fdX; PCPHCorr(d);fdY; CCPHCorr(d))</span>
<span class="t" style="top:247.77px;font-size:11.5px;line-height:11.5px;color:#000;left:1176.80px;transform-origin:0 0;transform:scaleX(0.9267);">No bound</span>
<div class="a" style="left:706px;top:260px;width:530px;height:1px;background:#e2eaf4;"></div>
<div class="a" style="left:706px;top:261px;width:530px;height:13px;background:#c9d5e6;"></div>
<div class="a tri" style="left:708px;top:261px;"></div>
<div class="a tri" style="left:800px;top:261px;"></div>
<div class="a tri" style="left:1174px;top:261px;"></div>
<span class="t" style="top:261.77px;font-size:11.5px;line-height:11.5px;color:#000;left:710.90px;transform-origin:0 0;transform:scaleX(0.8940);">PHCorrY(d; FD)</span>
<span class="t" style="top:261.77px;font-size:11.5px;line-height:11.5px;color:#000;left:803.00px;transform-origin:0 0;transform:scaleX(0.8959);">switch(FD; fdX; CCPHCorr(d);fdY; PCPHCorr(d))</span>
<span class="t" style="top:261.77px;font-size:11.5px;line-height:11.5px;color:#000;left:1176.80px;transform-origin:0 0;transform:scaleX(0.9267);">No bound</span>
<div class="a" style="left:706px;top:274px;width:530px;height:1px;background:#e2eaf4;"></div>
<div class="a" style="left:706px;top:275px;width:530px;height:13px;background:#d4e0f0;"></div>
<div class="a tri" style="left:708px;top:275px;"></div>
<div class="a tri" style="left:800px;top:275px;"></div>
<div class="a tri" style="left:1174px;top:275px;"></div>
<span class="t" style="top:275.77px;font-size:11.5px;line-height:11.5px;color:#000;left:710.90px;transform-origin:0 0;transform:scaleX(0.9317);">GLWidth(d)</span>
<span class="t" style="top:275.77px;font-size:11.5px;line-height:11.5px;color:#000;left:803.00px;transform-origin:0 0;transform:scaleX(0.9244);">40</span>
<span class="t" style="top:275.77px;font-size:11.5px;line-height:11.5px;color:#000;left:1176.80px;transform-origin:0 0;transform:scaleX(0.9267);">No bound</span>
<div class="a" style="left:706px;top:288px;width:530px;height:1px;background:#e2eaf4;"></div>
<div class="a" style="left:706px;top:289px;width:530px;height:13px;background:#c9d5e6;"></div>
<div class="a tri" style="left:708px;top:289px;"></div>
<div class="a tri" style="left:800px;top:289px;"></div>
<div class="a tri" style="left:1174px;top:289px;"></div>
<span class="t" style="top:289.77px;font-size:11.5px;line-height:11.5px;color:#000;left:710.90px;transform-origin:0 0;transform:scaleX(0.8884);">IFSC(d; a)</span>
<span class="t" style="top:289.77px;font-size:11.5px;line-height:11.5px;color:#000;left:803.00px;transform-origin:0 0;transform:scaleX(0.9334);">d/180*tan(a/2)*IF1(a; 0; 0; -a; 0; 180-a)</span>
<span class="t" style="top:289.77px;font-size:11.5px;line-height:11.5px;color:#000;left:1176.80px;transform-origin:0 0;transform:scaleX(0.9267);">No bound</span>
<div class="a" style="left:706px;top:302px;width:530px;height:1px;background:#e2eaf4;"></div>
<div class="a" style="left:706px;top:303px;width:530px;height:13px;background:#d4e0f0;"></div>
<div class="a tri" style="left:708px;top:303px;"></div>
<div class="a tri" style="left:800px;top:303px;"></div>
<div class="a tri" style="left:1174px;top:303px;"></div>
<span class="t" style="top:303.77px;font-size:11.5px;line-height:11.5px;color:#000;left:710.90px;transform-origin:0 0;transform:scaleX(0.8798);">OFEC(d; a)</span>
<span class="t" style="top:303.77px;font-size:11.5px;line-height:11.5px;color:#000;left:803.00px;transform-origin:0 0;transform:scaleX(0.9380);">d/180*tan(a/2)*IF1(a; 0; 0; 180+a; 0; a)</span>
<span class="t" style="top:303.77px;font-size:11.5px;line-height:11.5px;color:#000;left:1176.80px;transform-origin:0 0;transform:scaleX(0.9267);">No bound</span>
<div class="a" style="left:706px;top:316px;width:530px;height:1px;background:#e2eaf4;"></div>
<div class="a" style="left:706px;top:317px;width:530px;height:8px;background:#d3e2f2;"></div>
<div class="a" style="left:751px;top:118px;width:1px;height:1px;background:#56607a;"></div>
<div class="a" style="left:759px;top:118px;width:1px;height:1px;background:#56607a;"></div>
<div class="a" style="left:786px;top:118px;width:1px;height:1px;background:#56607a;"></div>
<div class="a" style="left:868px;top:118px;width:1px;height:1px;background:#56607a;"></div>
<div class="a" style="left:874px;top:118px;width:1px;height:1px;background:#56607a;"></div>
<div class="a" style="left:930px;top:118px;width:1px;height:1px;background:#56607a;"></div>
<div class="a" style="left:982px;top:118px;width:1px;height:1px;background:#56607a;"></div>
<div class="a" style="left:987px;top:118px;width:1px;height:1px;background:#56607a;"></div>
<div class="a" style="left:1038px;top:118px;width:1px;height:1px;background:#56607a;"></div>
<div class="a" style="left:1040px;top:118px;width:1px;height:1px;background:#56607a;"></div>
<div class="a" style="left:798px;top:118px;width:1px;height:207px;background:#e2eaf4;"></div>
<div class="a" style="left:1172px;top:118px;width:1px;height:207px;background:#e2eaf4;"></div>
<div class="a" style="left:1236px;top:101px;width:17px;height:224px;background:#f0f0f0;"></div>
<div class="a" style="left:1237px;top:277px;width:15px;height:31px;background:#cdcdcd;"></div>
<svg class="a" style="left:1236px;top:101px" width="17" height="224" viewBox="0 0 17 224"><path d="M4.8 11.2 L8.5 7.5 L12.2 11.2 M4.8 213.6 L8.5 217.3 L12.2 213.6" stroke="#505050" stroke-width="2" fill="none"/></svg>
<div class="a" style="left:706px;top:325px;width:547px;height:17px;background:#f0f0f0;"></div>
<div class="a" style="left:722px;top:326px;width:373px;height:15px;background:#cdcdcd;"></div>
<svg class="a" style="left:706px;top:325px" width="530" height="16" viewBox="0 0 530 16"><path d="M8.5 4.3 L4.8 8 L8.5 11.7 M519.5 4.3 L523.2 8 L519.5 11.7" stroke="#505050" stroke-width="2" fill="none"/></svg>
<div class="a" style="left:704px;top:356px;width:73px;height:21px;background:#e2e8f4;box-sizing:border-box;border:1px solid #7f8493;box-shadow:1px 1px 0 #a9b1c4;"></div>
<span class="t" style="top:361.44px;font-size:12px;line-height:12px;color:#000;left:726.50px;transform-origin:0 0;transform:scaleX(0.8604);">Add...</span>
<div class="a" style="left:785px;top:356px;width:73px;height:21px;background:#e2e8f4;box-sizing:border-box;border:1px solid #7f8493;box-shadow:1px 1px 0 #a9b1c4;"></div>
<span class="t" style="top:361.44px;font-size:12px;line-height:12px;color:#000;left:801.80px;transform-origin:0 0;transform:scaleX(0.8591);">Remove</span>
<div class="a" style="left:866px;top:356px;width:73px;height:21px;background:#e2e8f4;box-sizing:border-box;border:1px solid #7f8493;box-shadow:1px 1px 0 #a9b1c4;"></div>
<span class="t" style="top:361.44px;font-size:12px;line-height:12px;color:#000;left:889.40px;transform-origin:0 0;transform:scaleX(0.8480);">Edit...</span>
<div class="a" style="left:1029px;top:399px;width:73px;height:21px;background:#e2e8f4;box-sizing:border-box;border:1px solid #7f8493;box-shadow:1px 1px 0 #a9b1c4;"></div>
<span class="t" style="top:404.44px;font-size:12px;line-height:12px;color:#000;left:1057.50px;transform-origin:0 0;transform:scaleX(0.8651);">OK</span>
<div class="a" style="left:1110px;top:399px;width:73px;height:21px;background:#e2e8f4;box-sizing:border-box;border:1px solid #7f8493;box-shadow:1px 1px 0 #a9b1c4;"></div>
<span class="t" style="top:404.44px;font-size:12px;line-height:12px;color:#000;left:1129.50px;transform-origin:0 0;transform:scaleX(0.8748);">Cancel</span>
<div class="a" style="left:1191px;top:399px;width:73px;height:21px;background:#e2e8f4;box-sizing:border-box;border:1px solid #7f8493;box-shadow:1px 1px 0 #a9b1c4;"></div>
<span class="t" style="top:404.44px;font-size:12px;line-height:12px;color:#000;left:1216.30px;transform-origin:0 0;transform:scaleX(0.8475);"><u>H</u>elp</span>
<div class="a" style="left:361px;top:456px;width:288px;height:200px;overflow:hidden;">
<div class="a" style="left:0px;top:-2px;width:288px;height:230px;background:#d3e2f0;"></div>
<div class="a" style="left:0px;top:-2px;width:16px;height:230px;background:#f0f0f0;"></div>
<svg class="a" style="left:0px;top:-2px" width="16" height="20" viewBox="0 0 16 20"><path d="M4.5 11.3 L7.6 7.8 L10.7 11.3" stroke="#555" stroke-width="2" fill="none"/></svg>
<div class="a" style="left:16px;top:-2px;width:1px;height:230px;background:#a3abba;"></div>
<div class="a" style="left:20px;top:-2px;width:1px;height:230px;background:#b4bac6;"></div>
<div class="a" style="left:21px;top:-2px;width:2px;height:230px;background:#7b7b7b;"></div>
<div class="a" style="left:20px;top:-2px;width:268px;height:2px;background:#7b7b7b;"></div>
<div class="a" style="left:23px;top:0px;width:63px;height:17px;background:#d3e2f0;box-sizing:border-box;border-left:1px solid #fff;border-top:1px solid #fff;"></div>
<div class="a" style="left:86px;top:0px;width:1px;height:19px;background:#707070;"></div>
<div class="a" style="left:87px;top:0px;width:1px;height:19px;background:#aab0bb;"></div>
<div class="a" style="left:88px;top:0px;width:64px;height:17px;background:#d3e2f0;box-sizing:border-box;border-left:1px solid #fff;border-top:1px solid #fff;"></div>
<div class="a" style="left:152px;top:0px;width:1px;height:19px;background:#707070;"></div>
<div class="a" style="left:153px;top:0px;width:1px;height:19px;background:#aab0bb;"></div>
<div class="a" style="left:154px;top:0px;width:76px;height:17px;background:#d3e2f0;box-sizing:border-box;border-left:1px solid #fff;border-top:1px solid #fff;"></div>
<div class="a" style="left:230px;top:0px;width:1px;height:19px;background:#707070;"></div>
<div class="a" style="left:231px;top:0px;width:1px;height:19px;background:#aab0bb;"></div>
<div class="a" style="left:232px;top:0px;width:52px;height:17px;background:#d3e2f0;box-sizing:border-box;border-left:1px solid #fff;border-top:1px solid #fff;"></div>
<div class="a" style="left:284px;top:0px;width:1px;height:19px;background:#707070;"></div>
<div class="a" style="left:285px;top:0px;width:1px;height:19px;background:#aab0bb;"></div>
<div class="a" style="left:286px;top:0px;width:14px;height:17px;background:#d3e2f0;box-sizing:border-box;border-left:1px solid #fff;border-top:1px solid #fff;"></div>
<div class="a" style="left:300px;top:0px;width:1px;height:19px;background:#707070;"></div>
<div class="a" style="left:301px;top:0px;width:1px;height:19px;background:#aab0bb;"></div>
<div class="a" style="left:23px;top:17px;width:265px;height:2px;background:#808080;"></div>
<span class="t" style="top:4.14px;font-size:12px;line-height:12px;color:#000;left:29.40px;transform-origin:0 0;transform:scaleX(0.9800);">Name</span>
<span class="t" style="top:4.14px;font-size:12px;line-height:12px;color:#000;left:93.10px;transform-origin:0 0;transform:scaleX(0.9622);">Group</span>
<span class="t" style="top:4.14px;font-size:12px;line-height:12px;color:#000;left:158.80px;transform-origin:0 0;transform:scaleX(0.9184);">Expression</span>
<span class="t" style="top:4.14px;font-size:12px;line-height:12px;color:#000;left:250.10px;transform-origin:0 0;transform:scaleX(0.9691);">Value</span>
<div class="a" style="left:23px;top:19px;width:265px;height:2px;background:#c9d5e6;"></div>
<div class="a" style="left:23px;top:21px;width:265px;height:1px;background:#e2eaf4;"></div>
<div class="a" style="left:23px;top:22px;width:265px;height:26px;background:#d4e0f0;"></div>
<svg class="a" style="left:29.60px;top:26.30px" width="17" height="16" viewBox="0 0 17 16"><path d="M5.1 0.65 H0.65 V15.15 H5.1 M11.4 0.65 H15.85 V15.15 H11.4" stroke="#0f2d5a" stroke-width="1.3" fill="none"/></svg>
<span class="t" style="top:29.14px;font-size:12px;line-height:12px;color:#000;left:55.50px;transform-origin:0 0;transform:scaleX(0.7990);">DT</span>
<span class="t" style="top:29.14px;font-size:12px;line-height:12px;color:#000;left:91.50px;transform-origin:0 0;transform:scaleX(0.9985);">Main</span>
<span class="t" style="top:29.14px;font-size:12px;line-height:12px;color:#000;left:157.20px;transform-origin:0 0;transform:scaleX(0.9491);">dtID</span>
<span class="t" style="top:29.14px;font-size:12px;line-height:12px;color:#000;left:255.80px;transform-origin:0 0;transform:scaleX(0.9064);">-1.00</span>
<div class="a tri2" style="left:154px;top:22px;"></div>
<div class="a" style="left:23px;top:48px;width:265px;height:1px;background:#e2eaf4;"></div>
<div class="a" style="left:23px;top:49px;width:265px;height:26px;background:#c9d5e6;"></div>
<svg class="a" style="left:29.60px;top:53.30px" width="17" height="16" viewBox="0 0 17 16"><path d="M5.1 0.65 H0.65 V15.15 H5.1 M11.4 0.65 H15.85 V15.15 H11.4" stroke="#0f2d5a" stroke-width="1.3" fill="none"/></svg>
<span class="t" style="top:56.14px;font-size:12px;line-height:12px;color:#000;left:55.50px;transform-origin:0 0;transform:scaleX(0.6006);">L</span>
<span class="t" style="top:56.14px;font-size:12px;line-height:12px;color:#000;left:91.50px;transform-origin:0 0;transform:scaleX(0.9985);">Main</span>
<span class="t" style="top:56.14px;font-size:12px;line-height:12px;color:#000;left:157.20px;transform-origin:0 0;transform:scaleX(0.8583);">280</span>
<span class="t" style="top:56.14px;font-size:12px;line-height:12px;color:#000;left:247.70px;transform-origin:0 0;transform:scaleX(0.8960);">280.00</span>
<div class="a tri2" style="left:154px;top:49px;"></div>
<div class="a" style="left:23px;top:75px;width:265px;height:1px;background:#e2eaf4;"></div>
<div class="a" style="left:23px;top:76px;width:265px;height:26px;background:#d4e0f0;"></div>
<svg class="a" style="left:29.60px;top:80.30px" width="17" height="16" viewBox="0 0 17 16"><path d="M5.1 0.65 H0.65 V15.15 H5.1 M11.4 0.65 H15.85 V15.15 H11.4" stroke="#0f2d5a" stroke-width="1.3" fill="none"/></svg>
<span class="t" style="top:83.14px;font-size:12px;line-height:12px;color:#000;left:55.20px;transform-origin:0 0;transform:scaleX(0.8995);">W</span>
<span class="t" style="top:83.14px;font-size:12px;line-height:12px;color:#000;left:91.50px;transform-origin:0 0;transform:scaleX(0.9985);">Main</span>
<span class="t" style="top:83.14px;font-size:12px;line-height:12px;color:#000;left:157.20px;transform-origin:0 0;transform:scaleX(0.8583);">200</span>
<span class="t" style="top:83.14px;font-size:12px;line-height:12px;color:#000;left:247.70px;transform-origin:0 0;transform:scaleX(0.8960);">200.00</span>
<div class="a tri2" style="left:154px;top:76px;"></div>
<div class="a" style="left:23px;top:102px;width:265px;height:1px;background:#e2eaf4;"></div>
<div class="a" style="left:23px;top:103px;width:265px;height:26px;background:#c9d5e6;"></div>
<svg class="a" style="left:29.60px;top:107.30px" width="17" height="16" viewBox="0 0 17 16"><path d="M5.1 0.65 H0.65 V15.15 H5.1 M11.4 0.65 H15.85 V15.15 H11.4" stroke="#0f2d5a" stroke-width="1.3" fill="none"/></svg>
<span class="t" style="top:110.14px;font-size:12px;line-height:12px;color:#000;left:55.50px;transform-origin:0 0;transform:scaleX(0.9259);">H</span>
<span class="t" style="top:110.14px;font-size:12px;line-height:12px;color:#000;left:91.50px;transform-origin:0 0;transform:scaleX(0.9985);">Main</span>
<span class="t" style="top:110.14px;font-size:12px;line-height:12px;color:#000;left:157.70px;transform-origin:0 0;transform:scaleX(0.8333);">150</span>
<span class="t" style="top:110.14px;font-size:12px;line-height:12px;color:#000;left:248.50px;transform-origin:0 0;transform:scaleX(0.8742);">150.00</span>
<div class="a tri2" style="left:154px;top:103px;"></div>
<div class="a" style="left:23px;top:129px;width:265px;height:1px;background:#e2eaf4;"></div>
<div class="a" style="left:23px;top:130px;width:265px;height:26px;background:#d4e0f0;"></div>
<div class="a" style="left:26px;top:130px;width:24px;height:24px;background:#0b2a5b;"></div>
<svg class="a" style="left:29.60px;top:134.30px" width="17" height="16" viewBox="0 0 17 16"><path d="M5.1 0.65 H0.65 V15.15 H5.1 M11.4 0.65 H15.85 V15.15 H11.4" stroke="#fff" stroke-width="1.3" fill="none"/><path d="M8.25 3 V12.8" stroke="#fff" stroke-width="2.4" fill="none"/></svg>
<span class="t" style="top:137.14px;font-size:12px;line-height:12px;color:#000;left:55.50px;transform-origin:0 0;transform:scaleX(0.7990);">GL</span>
<span class="t" style="top:137.14px;font-size:12px;line-height:12px;color:#000;left:91.50px;transform-origin:0 0;transform:scaleX(0.9246);">Glue Flap</span>
<span class="t" style="top:137.14px;font-size:12px;line-height:12px;color:#000;left:157.20px;transform-origin:0 0;transform:scaleX(0.9831);">GLWidth(d())</span>
<span class="t" style="top:137.14px;font-size:12px;line-height:12px;color:#000;left:254.10px;transform-origin:0 0;transform:scaleX(0.8816);">30.00</span>
<div class="a tri2" style="left:154px;top:130px;"></div>
<div class="a" style="left:23px;top:156px;width:265px;height:1px;background:#e2eaf4;"></div>
<div class="a" style="left:23px;top:157px;width:265px;height:26px;background:#d3e2f2;"></div>
<div class="a" style="left:23px;top:183px;width:265px;height:1px;background:#e2eaf4;"></div>
<div class="a" style="left:23px;top:184px;width:265px;height:26px;background:#d3e2f2;"></div>
<div class="a" style="left:23px;top:210px;width:265px;height:1px;background:#e2eaf4;"></div>
<div class="a" style="left:23px;top:211px;width:265px;height:26px;background:#d3e2f2;"></div>
<div class="a" style="left:86px;top:19px;width:1px;height:230px;background:#e2eaf4;"></div>
<div class="a" style="left:152px;top:19px;width:1px;height:230px;background:#e2eaf4;"></div>
<div class="a" style="left:230px;top:19px;width:1px;height:230px;background:#e2eaf4;"></div>
<div class="a" style="left:284px;top:19px;width:1px;height:230px;background:#e2eaf4;"></div>
</div>
<div class="a" style="left:1024px;top:461px;width:285px;height:195px;overflow:hidden;">
<div class="a" style="left:0px;top:0px;width:288px;height:230px;background:#d3e2f0;"></div>
<div class="a" style="left:0px;top:0px;width:16px;height:230px;background:#f0f0f0;"></div>
<svg class="a" style="left:0px;top:0px" width="16" height="20" viewBox="0 0 16 20"><path d="M4.5 11.3 L7.6 7.8 L10.7 11.3" stroke="#555" stroke-width="2" fill="none"/></svg>
<div class="a" style="left:16px;top:0px;width:1px;height:230px;background:#a3abba;"></div>
<div class="a" style="left:20px;top:0px;width:1px;height:230px;background:#b4bac6;"></div>
<div class="a" style="left:21px;top:0px;width:2px;height:230px;background:#7b7b7b;"></div>
<div class="a" style="left:20px;top:0px;width:268px;height:2px;background:#7b7b7b;"></div>
<div class="a" style="left:23px;top:2px;width:63px;height:17px;background:#d3e2f0;box-sizing:border-box;border-left:1px solid #fff;border-top:1px solid #fff;"></div>
<div class="a" style="left:86px;top:2px;width:1px;height:19px;background:#707070;"></div>
<div class="a" style="left:87px;top:2px;width:1px;height:19px;background:#aab0bb;"></div>
<div class="a" style="left:88px;top:2px;width:64px;height:17px;background:#d3e2f0;box-sizing:border-box;border-left:1px solid #fff;border-top:1px solid #fff;"></div>
<div class="a" style="left:152px;top:2px;width:1px;height:19px;background:#707070;"></div>
<div class="a" style="left:153px;top:2px;width:1px;height:19px;background:#aab0bb;"></div>
<div class="a" style="left:154px;top:2px;width:76px;height:17px;background:#d3e2f0;box-sizing:border-box;border-left:1px solid #fff;border-top:1px solid #fff;"></div>
<div class="a" style="left:230px;top:2px;width:1px;height:19px;background:#707070;"></div>
<div class="a" style="left:231px;top:2px;width:1px;height:19px;background:#aab0bb;"></div>
<div class="a" style="left:232px;top:2px;width:52px;height:17px;background:#d3e2f0;box-sizing:border-box;border-left:1px solid #fff;border-top:1px solid #fff;"></div>
<div class="a" style="left:284px;top:2px;width:1px;height:19px;background:#707070;"></div>
<div class="a" style="left:285px;top:2px;width:1px;height:19px;background:#aab0bb;"></div>
<div class="a" style="left:286px;top:2px;width:14px;height:17px;background:#d3e2f0;box-sizing:border-box;border-left:1px solid #fff;border-top:1px solid #fff;"></div>
<div class="a" style="left:300px;top:2px;width:1px;height:19px;background:#707070;"></div>
<div class="a" style="left:301px;top:2px;width:1px;height:19px;background:#aab0bb;"></div>
<div class="a" style="left:23px;top:19px;width:265px;height:2px;background:#808080;"></div>
<span class="t" style="top:6.14px;font-size:12px;line-height:12px;color:#000;left:29.40px;transform-origin:0 0;transform:scaleX(0.9800);">Name</span>
<span class="t" style="top:6.14px;font-size:12px;line-height:12px;color:#000;left:93.10px;transform-origin:0 0;transform:scaleX(0.9622);">Group</span>
<span class="t" style="top:6.14px;font-size:12px;line-height:12px;color:#000;left:158.80px;transform-origin:0 0;transform:scaleX(0.9184);">Expression</span>
<span class="t" style="top:6.14px;font-size:12px;line-height:12px;color:#000;left:250.10px;transform-origin:0 0;transform:scaleX(0.9691);">Value</span>
<div class="a" style="left:23px;top:21px;width:265px;height:2px;background:#c9d5e6;"></div>
<div class="a" style="left:23px;top:23px;width:265px;height:1px;background:#e2eaf4;"></div>
<div class="a" style="left:23px;top:24px;width:265px;height:26px;background:#d4e0f0;"></div>
<svg class="a" style="left:29.60px;top:28.30px" width="17" height="16" viewBox="0 0 17 16"><path d="M5.1 0.65 H0.65 V15.15 H5.1 M11.4 0.65 H15.85 V15.15 H11.4" stroke="#0f2d5a" stroke-width="1.3" fill="none"/></svg>
<span class="t" style="top:31.14px;font-size:12px;line-height:12px;color:#000;left:55.50px;transform-origin:0 0;transform:scaleX(0.7990);">DT</span>
<span class="t" style="top:31.14px;font-size:12px;line-height:12px;color:#000;left:91.50px;transform-origin:0 0;transform:scaleX(0.9985);">Main</span>
<span class="t" style="top:31.14px;font-size:12px;line-height:12px;color:#000;left:157.20px;transform-origin:0 0;transform:scaleX(0.9491);">dtID</span>
<span class="t" style="top:31.14px;font-size:12px;line-height:12px;color:#000;left:255.80px;transform-origin:0 0;transform:scaleX(0.9064);">-1.00</span>
<div class="a tri2" style="left:154px;top:24px;"></div>
<div class="a" style="left:23px;top:50px;width:265px;height:1px;background:#e2eaf4;"></div>
<div class="a" style="left:23px;top:51px;width:265px;height:26px;background:#c9d5e6;"></div>
<svg class="a" style="left:29.60px;top:55.30px" width="17" height="16" viewBox="0 0 17 16"><path d="M5.1 0.65 H0.65 V15.15 H5.1 M11.4 0.65 H15.85 V15.15 H11.4" stroke="#0f2d5a" stroke-width="1.3" fill="none"/></svg>
<span class="t" style="top:58.14px;font-size:12px;line-height:12px;color:#000;left:55.50px;transform-origin:0 0;transform:scaleX(0.6006);">L</span>
<span class="t" style="top:58.14px;font-size:12px;line-height:12px;color:#000;left:91.50px;transform-origin:0 0;transform:scaleX(0.9985);">Main</span>
<span class="t" style="top:58.14px;font-size:12px;line-height:12px;color:#000;left:157.20px;transform-origin:0 0;transform:scaleX(0.8583);">280</span>
<span class="t" style="top:58.14px;font-size:12px;line-height:12px;color:#000;left:247.70px;transform-origin:0 0;transform:scaleX(0.8960);">280.00</span>
<div class="a tri2" style="left:154px;top:51px;"></div>
<div class="a" style="left:23px;top:77px;width:265px;height:1px;background:#e2eaf4;"></div>
<div class="a" style="left:23px;top:78px;width:265px;height:26px;background:#d4e0f0;"></div>
<svg class="a" style="left:29.60px;top:82.30px" width="17" height="16" viewBox="0 0 17 16"><path d="M5.1 0.65 H0.65 V15.15 H5.1 M11.4 0.65 H15.85 V15.15 H11.4" stroke="#0f2d5a" stroke-width="1.3" fill="none"/></svg>
<span class="t" style="top:85.14px;font-size:12px;line-height:12px;color:#000;left:55.20px;transform-origin:0 0;transform:scaleX(0.8995);">W</span>
<span class="t" style="top:85.14px;font-size:12px;line-height:12px;color:#000;left:91.50px;transform-origin:0 0;transform:scaleX(0.9985);">Main</span>
<span class="t" style="top:85.14px;font-size:12px;line-height:12px;color:#000;left:157.20px;transform-origin:0 0;transform:scaleX(0.8583);">200</span>
<span class="t" style="top:85.14px;font-size:12px;line-height:12px;color:#000;left:247.70px;transform-origin:0 0;transform:scaleX(0.8960);">200.00</span>
<div class="a tri2" style="left:154px;top:78px;"></div>
<div class="a" style="left:23px;top:104px;width:265px;height:1px;background:#e2eaf4;"></div>
<div class="a" style="left:23px;top:105px;width:265px;height:26px;background:#c9d5e6;"></div>
<svg class="a" style="left:29.60px;top:109.30px" width="17" height="16" viewBox="0 0 17 16"><path d="M5.1 0.65 H0.65 V15.15 H5.1 M11.4 0.65 H15.85 V15.15 H11.4" stroke="#0f2d5a" stroke-width="1.3" fill="none"/></svg>
<span class="t" style="top:112.14px;font-size:12px;line-height:12px;color:#000;left:55.50px;transform-origin:0 0;transform:scaleX(0.9259);">H</span>
<span class="t" style="top:112.14px;font-size:12px;line-height:12px;color:#000;left:91.50px;transform-origin:0 0;transform:scaleX(0.9985);">Main</span>
<span class="t" style="top:112.14px;font-size:12px;line-height:12px;color:#000;left:157.70px;transform-origin:0 0;transform:scaleX(0.8333);">150</span>
<span class="t" style="top:112.14px;font-size:12px;line-height:12px;color:#000;left:248.50px;transform-origin:0 0;transform:scaleX(0.8742);">150.00</span>
<div class="a tri2" style="left:154px;top:105px;"></div>
<div class="a" style="left:23px;top:131px;width:265px;height:1px;background:#e2eaf4;"></div>
<div class="a" style="left:23px;top:132px;width:265px;height:26px;background:#d4e0f0;"></div>
<div class="a" style="left:26px;top:132px;width:24px;height:24px;background:#0b2a5b;"></div>
<svg class="a" style="left:29.60px;top:136.30px" width="17" height="16" viewBox="0 0 17 16"><path d="M5.1 0.65 H0.65 V15.15 H5.1 M11.4 0.65 H15.85 V15.15 H11.4" stroke="#fff" stroke-width="1.3" fill="none"/><path d="M8.25 3 V12.8" stroke="#fff" stroke-width="2.4" fill="none"/></svg>
<span class="t" style="top:139.14px;font-size:12px;line-height:12px;color:#000;left:55.50px;transform-origin:0 0;transform:scaleX(0.7990);">GL</span>
<span class="t" style="top:139.14px;font-size:12px;line-height:12px;color:#000;left:91.50px;transform-origin:0 0;transform:scaleX(0.9246);">Glue Flap</span>
<span class="t" style="top:139.14px;font-size:12px;line-height:12px;color:#000;left:157.20px;transform-origin:0 0;transform:scaleX(0.9831);">GLWidth(d())</span>
<span class="t" style="top:139.14px;font-size:12px;line-height:12px;color:#000;left:254.10px;transform-origin:0 0;transform:scaleX(0.8816);">40.00</span>
<div class="a tri2" style="left:154px;top:132px;"></div>
<div class="a" style="left:23px;top:158px;width:265px;height:1px;background:#e2eaf4;"></div>
<div class="a" style="left:23px;top:159px;width:265px;height:26px;background:#d3e2f2;"></div>
<div class="a" style="left:23px;top:185px;width:265px;height:1px;background:#e2eaf4;"></div>
<div class="a" style="left:23px;top:186px;width:265px;height:26px;background:#d3e2f2;"></div>
<div class="a" style="left:23px;top:212px;width:265px;height:1px;background:#e2eaf4;"></div>
<div class="a" style="left:23px;top:213px;width:265px;height:26px;background:#d3e2f2;"></div>
<div class="a" style="left:86px;top:21px;width:1px;height:230px;background:#e2eaf4;"></div>
<div class="a" style="left:152px;top:21px;width:1px;height:230px;background:#e2eaf4;"></div>
<div class="a" style="left:230px;top:21px;width:1px;height:230px;background:#e2eaf4;"></div>
<div class="a" style="left:284px;top:21px;width:1px;height:230px;background:#e2eaf4;"></div>
</div>
<span class="t" style="top:468.74px;font-size:12px;line-height:12px;color:#111;left:163.30px;transform-origin:0 0;transform:scaleX(1.0136);">Material is flute B (3mm):</span>
<span class="t" style="top:472.04px;font-size:12px;line-height:12px;color:#111;left:826.70px;transform-origin:0 0;transform:scaleX(1.0181);">Material is flute B (3mm):</span>
<svg class="a" style="left:0;top:0" width="1309" height="687" viewBox="0 0 1309 687">
<path d="M26.4 483.1 V476.1 Q26.4 469.6 32.9 469.6 H112.4 Q118.9 469.6 118.9 476.1 V483.1 M24.6 483.1 V550.2 M120.2 483.1 V550.2 M120.2 519.4 H179.3 L186.6 550.9 H230.0 A4.6 4.6 0 0 0 239.2 550.9 H282.8 L290.5 519.4 H348.8 V601.9 M24.8 550.2 L15.3 553.1 V591.8 L24.8 601.9 M24.8 601.9 L27.8 646.2 H63.8 L72.7 636.0 H86.0 L96.1 646.2 H119.5 V605.5 L117.6 603.7 M120.8 601.9 L132.8 636.0 H153.0 L187.8 601.9 M188.0 601.9 L190.3 646.2 H226.4 L235.6 636.0 H248.6 L258.7 646.2 H281.8 V605.3 L280.0 603.5 M282.8 601.9 L295.7 636.0 H315.5 L349.2 601.9" stroke="#ff2222" stroke-width="1.25" fill="none"/><path d="M24.8 483.1 H120.2 M24.8 550.2 H120.2 M120.2 550.9 H186.8 M282.5 550.9 H348.8 M24.8 601.9 H348.8 M25.2 550.2 V601.9 M120.2 550.2 V601.9 M187.8 550.2 V601.9 M282.5 550.2 V601.9 M86.0 636.0 L118.0 604.5 M248.6 636.0 L280.5 604.1" stroke="#2cee2c" stroke-width="1.3" fill="none"/><path d="M230.5 575.6 V593.2 H239.6 V584.6 Z" fill="#fff" stroke="#2f7b7b" stroke-width="1.1"/><path d="M232.4 578.6 L235.0 581.2 V593.0 H232.4 Z M235.0 582.0 L236.6 584.5 L235.0 587.0 Z M236.4 588.0 L237.6 589.5 L238.8 588.0 V593.0 H236.4 Z" fill="#2f7b7b"/>
<path d="M692.4 485.1 V478.1 Q692.4 471.6 698.9 471.6 H778.4 Q784.9 471.6 784.9 478.1 V485.1 M690.6 485.1 V552.2 M786.2 485.1 V552.2 M786.2 521.4 H845.3 L852.6 552.9 H896.0 A4.6 4.6 0 0 0 905.2 552.9 H948.8 L956.5 521.4 H1014.8 V603.9 M690.8 552.2 L677.5 556.2 V589.8 L690.8 603.9 M690.8 603.9 L693.8 648.2 H729.8 L738.7 638.0 H752.0 L762.1 648.2 H785.5 V607.5 L783.6 605.7 M786.8 603.9 L798.8 638.0 H819.0 L853.8 603.9 M854.0 603.9 L856.3 648.2 H892.4 L901.6 638.0 H914.6 L924.7 648.2 H947.8 V607.3 L946.0 605.5 M948.8 603.9 L961.7 638.0 H981.5 L1015.2 603.9" stroke="#ff2222" stroke-width="1.25" fill="none"/><path d="M690.8 485.1 H786.2 M690.8 552.2 H786.2 M786.2 552.9 H852.8 M948.5 552.9 H1014.8 M690.8 603.9 H1014.8 M691.2 552.2 V603.9 M786.2 552.2 V603.9 M853.8 552.2 V603.9 M948.5 552.2 V603.9 M752.0 638.0 L784.0 606.5 M914.6 638.0 L946.5 606.1" stroke="#2cee2c" stroke-width="1.3" fill="none"/><path d="M896.5 577.6 V595.2 H905.6 V586.6 Z" fill="#fff" stroke="#2f7b7b" stroke-width="1.1"/><path d="M898.4 580.6 L901.0 583.2 V595.0 H898.4 Z M901.0 584.0 L902.6 586.5 L901.0 589.0 Z M902.4 590.0 L903.6 591.5 L904.8 590.0 V595.0 H902.4 Z" fill="#2f7b7b"/>
<path d="M25.5 576.6 H63.8 M5.2 576.6 H13.5" stroke="#ff00ff" stroke-width="1" fill="none"/>
<path d="M5.2 574.8 V578.6 M35 574.8 V578.6" stroke="#ff00ff" stroke-width="1.2" fill="none"/><path d="M5.2 575.6 L11 576.6 L5.2 577.6 Z M35 575.6 L28 576.6 L35 577.6 Z" fill="#ff00ff" stroke="#ff00ff" stroke-width="0.6"/>
<path d="M692 576.6 H743 M668.6 576.6 H677.2" stroke="#ff00ff" stroke-width="1" fill="none"/>
<path d="M668.6 574.8 V578.8 M700.9 574.8 V578.8" stroke="#ff00ff" stroke-width="1.2" fill="none"/><path d="M668.6 575.6 L675 576.6 L668.6 577.6 Z M700.9 575.6 L694 576.6 L700.9 577.6 Z" fill="#ff00ff" stroke="#ff00ff" stroke-width="0.6"/>
<rect x="27.6" y="272.6" width="452.8" height="14.7" fill="none" stroke="#ff0000" stroke-width="2"/>
<ellipse cx="255.3" cy="279.5" rx="21.3" ry="12.1" fill="none" stroke="#ff0000" stroke-width="2"/>
<rect x="705.4" y="272.7" width="121.6" height="14.2" fill="none" stroke="#0000ff" stroke-width="2.3"/>
<path d="M273.8 289.2 L282.2 293.1 L290.6 297.0 L299.1 300.9 L307.5 304.9 L316.0 309.0 L324.5 313.1 L332.9 317.3 L341.4 321.6 L349.8 325.9 L358.3 330.3 L366.7 334.8 L375.0 339.3 L383.4 343.9 L391.7 348.6 L400.0 353.4 L408.2 358.2 L416.4 363.2 L424.5 368.2 L432.6 373.3 L440.6 378.5 L448.5 383.8 L456.4 389.2 L464.1 394.6 L471.8 400.2 L479.4 405.9 L486.9 411.7 L494.3 417.5 L501.7 423.5 L508.9 429.6 L515.9 435.8 L522.9 442.2 L529.8 448.6 L536.5 455.1 L543.1 461.8 L549.5 468.6 L555.8 475.5 L562.0 482.6 L568.0 489.7 L573.9 497.0 L579.6 504.4 L585.1 512.0 L590.5 519.7 L595.7 527.5 L600.7 535.5 L605.5 543.6 L610.1 551.9 L614.6 560.3 L618.8 568.8 L622.9 577.5 L623.4 578.6" stroke="#ff0000" stroke-width="2.0" fill="none" stroke-linecap="round" stroke-linejoin="round"/><path d="M626.7 586.4 L618.2 578.3 L626.6 574.6 Z" fill="#ff0000"/>
<path d="M624.3 610.2 L613.6 614.7 L602.8 619.1 L591.9 623.3 L581.0 627.3 L570.0 631.1 L558.9 634.8 L547.8 638.3 L536.6 641.6 L525.3 644.8 L514.0 647.7 L502.7 650.5 L491.3 653.1 L479.9 655.5 L468.4 657.7 L456.9 659.8 L445.3 661.6 L433.8 663.3 L422.2 664.8 L410.5 666.1 L398.9 667.2 L387.2 668.1 L375.5 668.8 L363.8 669.3 L352.1 669.7 L340.4 669.8 L328.7 669.7 L317.0 669.5 L305.3 669.0 L293.6 668.3 L281.9 667.5 L270.2 666.4 L258.5 665.1 L246.9 663.5 L235.3 661.7 L223.9 659.5 L212.5 657.0 L201.3 654.1 L190.1 650.9 L179.2 647.2 L168.4 643.0 L157.8 638.4 L147.4 633.3 L137.2 627.6 L127.3 621.4 L117.5 614.9 L107.9 608.0 L98.5 601.0 L89.1 593.8 L79.8 586.6 L77.5 584.9" stroke="#ff0000" stroke-width="2.2" fill="none" stroke-linecap="round" stroke-linejoin="round"/><path d="M70.6 579.6 L81.5 582.1 L75.9 589.4 Z" fill="#ff0000"/>
<path d="M821.6 280.3 L833.1 282.5 L844.6 284.8 L856.2 287.2 L867.7 289.7 L879.3 292.3 L890.9 295.1 L902.5 297.9 L914.0 300.8 L925.6 303.9 L937.1 307.1 L948.6 310.4 L960.0 313.8 L971.4 317.4 L982.7 321.2 L994.0 325.0 L1005.2 329.1 L1016.3 333.3 L1027.3 337.7 L1038.2 342.2 L1049.0 346.9 L1059.7 351.8 L1070.3 356.9 L1080.7 362.2 L1091.0 367.6 L1101.2 373.3 L1111.2 379.2 L1121.1 385.2 L1130.8 391.5 L1140.3 398.0 L1149.6 404.8 L1158.8 411.7 L1167.7 418.9 L1176.5 426.4 L1185.0 434.0 L1193.3 442.0 L1201.4 450.1 L1209.3 458.6 L1216.9 467.3 L1224.2 476.3 L1231.3 485.5 L1238.2 495.0 L1244.7 504.8 L1251.0 514.9 L1257.0 525.3 L1262.7 536.0 L1268.1 547.0 L1273.1 558.2 L1277.9 569.8 L1282.3 581.8 L1283.9 586.3" stroke="#0000ff" stroke-width="1.9" fill="none" stroke-linecap="round" stroke-linejoin="round"/><path d="M1286.4 594.0 L1278.5 584.7 L1287.2 581.8 Z" fill="#0000ff"/>
<path d="M1286.2 617.7 L1276.0 622.8 L1265.6 627.5 L1255.1 632.0 L1244.6 636.1 L1233.9 640.0 L1223.2 643.6 L1212.4 647.0 L1201.5 650.1 L1190.5 653.0 L1179.5 655.7 L1168.5 658.2 L1157.4 660.6 L1146.2 662.8 L1135.0 664.8 L1123.8 666.7 L1112.6 668.5 L1101.3 670.1 L1090.0 671.5 L1078.6 672.8 L1067.3 674.0 L1055.9 675.0 L1044.5 675.8 L1033.1 676.5 L1021.7 677.0 L1010.3 677.3 L998.8 677.3 L987.4 677.2 L976.0 676.8 L964.6 676.3 L953.2 675.4 L941.8 674.3 L930.4 673.0 L919.1 671.4 L907.8 669.5 L896.6 667.2 L885.6 664.7 L874.6 661.7 L863.7 658.5 L853.1 654.8 L842.6 650.8 L832.2 646.3 L822.1 641.4 L812.3 636.1 L802.6 630.3 L793.3 624.1 L784.2 617.3 L775.4 610.1 L766.9 602.3 L758.8 594.0 L756.8 591.8" stroke="#0000ff" stroke-width="2.3" fill="none" stroke-linecap="round" stroke-linejoin="round"/><path d="M751.0 585.1 L761.3 589.9 L754.3 595.9 Z" fill="#0000ff"/>
</svg>
<span class="t" style="top:564.34px;font-size:12px;line-height:12px;color:#ff00ff;left:35.30px;transform-origin:0 0;transform:scaleX(0.9907);">GL [30.00]</span>
<span class="t" style="top:564.34px;font-size:12px;line-height:12px;color:#ff00ff;left:714.80px;transform-origin:0 0;transform:scaleX(0.9745);">GL [40.00]</span>
</body></html>
